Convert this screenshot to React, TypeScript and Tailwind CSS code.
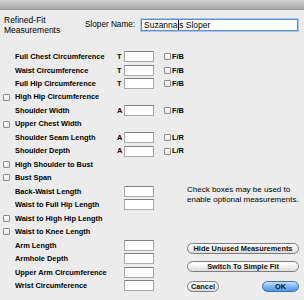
import React from 'react';

type Row = { label: string; cb?: boolean; letter?: string; input?: boolean; side?: string };

const rows: Row[] = [
  { label: 'Full Chest Circumference', letter: 'T', input: true, side: 'F/B' },
  { label: 'Waist Circumference', letter: 'T', input: true, side: 'F/B' },
  { label: 'Full Hip Circumference', letter: 'T', input: true, side: 'F/B' },
  { label: 'High Hip Circumference', cb: true },
  { label: 'Shoulder Width', letter: 'A', input: true, side: 'F/B' },
  { label: 'Upper Chest Width', cb: true },
  { label: 'Shoulder Seam Length', letter: 'A', input: true, side: 'L/R' },
  { label: 'Shoulder Depth', letter: 'A', input: true, side: 'L/R' },
  { label: 'High Shoulder to Bust', cb: true },
  { label: 'Bust Span', cb: true },
  { label: 'Back-Waist Length', input: true },
  { label: 'Waist to Full Hip Length', input: true },
  { label: 'Waist to High Hip Length', cb: true },
  { label: 'Waist to Knee Length', cb: true },
  { label: 'Arm Length', input: true },
  { label: 'Armhole Depth', input: true },
  { label: 'Upper Arm Circumference', input: true },
  { label: 'Wrist Circumference', input: true },
];

function Check() {
  return (
    <div className="w-[7px] h-[7px] shrink-0 rounded-[1px] border border-[#8c8c8c] bg-gradient-to-b from-[#ffffff] to-[#e4e4e4]" />
  );
}

function Field() {
  return <div className="w-[30px] h-[11px] shrink-0 bg-white border border-[#a9a9a9] border-t-[#808080]" />;
}

function Button({ children, className }: { children: React.ReactNode; className: string }) {
  return (
    <div
      className={`h-[11px] rounded-full border border-[#7d7d7d] bg-gradient-to-b from-[#ffffff] via-[#f2f2f2] to-[#dadada] flex items-center justify-center text-[7.4px] font-bold text-[#111] leading-none ${className}`}
    >
      {children}
    </div>
  );
}

export default function App() {
  return (
    <div
      className="w-[304px] h-[300px] bg-[#ececec] flex flex-col overflow-hidden text-black"
      style={{ fontFamily: '"Liberation Sans", Arial, sans-serif' }}
    >
      <div className="h-[10px] shrink-0 bg-gradient-to-b from-[#d2d2d2] to-[#a8a8a8] border-b border-[#999]" />
      <div className="h-[40px] shrink-0 flex items-start">
        <div className="w-[85px] pl-[4px] pt-[6px] text-[8.5px] leading-[9.5px]">
          <div>Refined-Fit</div>
          <div>Measurements</div>
        </div>
        <div className="flex items-center mt-[8px] h-[14px]">
          <div className="w-[55px] text-[8.2px] leading-none">Sloper Name:</div>
          <div className="relative ml-[1px] w-[157px] h-[12px] bg-white border border-[#5a8fd0] shadow-[0_0_0_1px_#a9c6ea] flex items-center pl-[2px] text-[8.5px] leading-none">
            <span>Suzanna</span>
            <span className="relative">
              '
              <span className="absolute left-[0px] top-[-1px] w-[1px] h-[10px] bg-black" />
            </span>
            <span>s Sloper</span>
          </div>
        </div>
      </div>
      <div className="flex">
        <div className="w-[187px] shrink-0 flex flex-col">
          {rows.map((r) => (
            <div key={r.label} className="h-[13.47px] flex items-center">
              <div className="w-[15px] shrink-0 flex items-center pl-[3px]">{r.cb && <Check />}</div>
              <div className="w-[102px] shrink-0 text-[7.4px] font-bold leading-none whitespace-nowrap">{r.label}</div>
              <div className="w-[7px] shrink-0 text-[7.4px] font-bold leading-none">{r.letter ?? ''}</div>
              {r.input && <Field />}
              {r.side && (
                <div className="flex items-center ml-[10px]">
                  <Check />
                  <span className="ml-[1px] text-[7.4px] font-bold leading-none">{r.side}</span>
                </div>
              )}
            </div>
          ))}
        </div>
        <div className="w-[112px] shrink-0 flex flex-col">
          <div className="mt-[135px] text-[8px] leading-[10px] whitespace-nowrap">
            <div>Check boxes may be used to</div>
            <div>enable optional measurements.</div>
          </div>
          <Button className="mt-[38px] w-[112px]">Hide Unused Measurements</Button>
          <Button className="mt-[7px] w-[112px]">Switch To Simple Fit</Button>
          <div className="mt-[9px] flex justify-between">
            <Button className="w-[32px]">Cancel</Button>
            <div className="w-[37px] h-[11px] rounded-full border border-[#3d6eb0] bg-gradient-to-b from-[#c6e2fb] via-[#7cb6ee] to-[#4c97e4] flex items-center justify-center text-[7.4px] font-bold text-[#111] leading-none">
              OK
            </div>
          </div>
        </div>
      </div>
    </div>
  );
}
